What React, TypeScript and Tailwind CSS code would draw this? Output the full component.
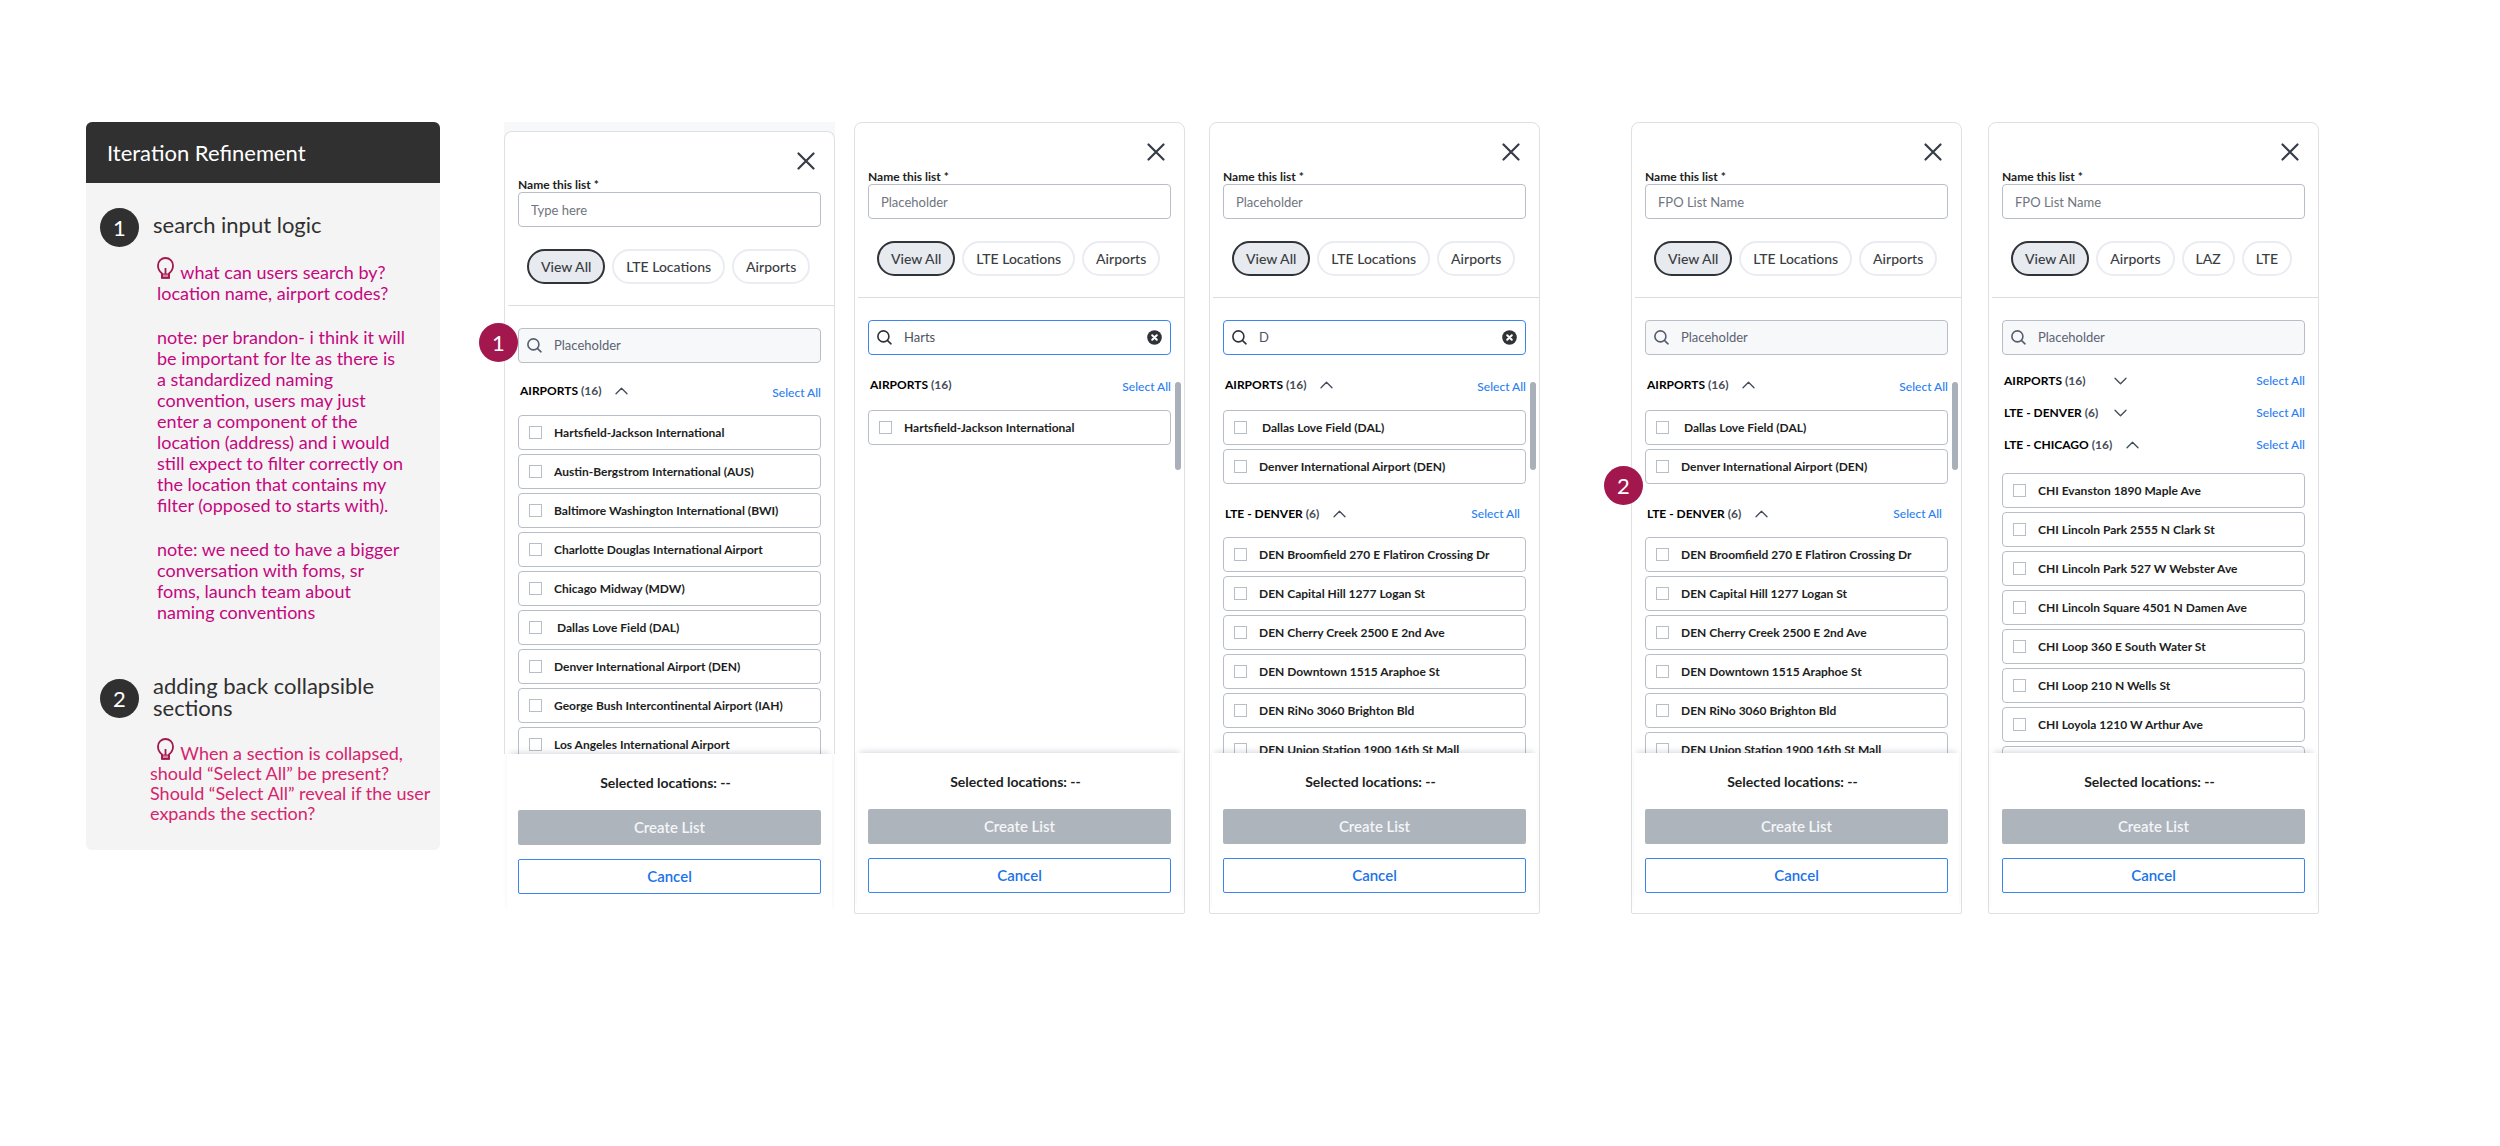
import { useState } from "react";
import { cva } from "class-variance-authority";
import clsx from "clsx";

interface Section {
  title: string;
  count: number;
  open?: boolean;
  chevron?: boolean;
  items: string[];
}

interface PanelProps {
  id: string;
  namePlaceholder: string;
  filters: string[];
  query?: string;
  sections: Section[];
  scrollbar?: boolean;
  sheet?: boolean; // slides over a grey page, no bottom edge
  compact?: boolean; // tighter section headings
  badge?: string;
  badgeCls?: string;
  className?: string;
}

const DEFAULT_FILTERS = ["View All", "LTE Locations", "Airports"];

const allAirports = [
  "Hartsfield-Jackson International",
  "Austin-Bergstrom International (AUS)",
  "Baltimore Washington International (BWI)",
  "Charlotte Douglas International Airport",
  "Chicago Midway (MDW)",
  "\u00a0Dallas Love Field (DAL)",
  "Denver International Airport (DEN)",
  "George Bush Intercontinental Airport (IAH)",
  "Los Angeles International Airport",
];

const denverSections: Section[] = [
  {
    title: "AIRPORTS",
    count: 16,
    open: true,
    chevron: true,
    items: ["\u00a0Dallas Love Field (DAL)", "Denver International Airport (DEN)"],
  },
  {
    title: "LTE - DENVER",
    count: 6,
    open: true,
    chevron: true,
    items: [
      "DEN Broomfield 270 E Flatiron Crossing Dr",
      "DEN Capital Hill 1277 Logan St",
      "DEN Cherry Creek 2500 E 2nd Ave",
      "DEN Downtown 1515 Araphoe St",
      "DEN RiNo 3060 Brighton Bld",
      "DEN Union Station 1900 16th St Mall",
    ],
  },
];

const chicagoSections: Section[] = [
  { title: "AIRPORTS", count: 16, chevron: true, items: [] },
  { title: "LTE - DENVER", count: 6, chevron: true, items: [] },
  {
    title: "LTE - CHICAGO",
    count: 16,
    open: true,
    chevron: true,
    items: [
      "CHI Evanston 1890 Maple Ave",
      "CHI Lincoln Park 2555 N Clark St",
      "CHI Lincoln Park 527 W Webster Ave",
      "CHI Lincoln Square 4501 N Damen Ave",
      "CHI Loop 360 E South Water St",
      "CHI Loop 210 N Wells St",
      "CHI Loyola 1210 W Arthur Ave",
      "",
    ],
  },
];

const chip = cva("h-[35px] rounded-full border-2 px-3 text-sm font-medium text-[#3a3d42]", {
  variants: {
    active: {
      true: "border-[#303338] bg-[#e7eaef]",
      false: "border-[#eaecf1] bg-white",
    },
  },
});

const CloseIcon = () => (
  <svg width="18" height="18" viewBox="0 0 18 18" fill="none" stroke="#363c48" strokeWidth="2.2" strokeLinecap="round">
    <path d="M1.5 1.5l15 15M16.5 1.5l-15 15" />
  </svg>
);

const SearchIcon = ({ active }: { active: boolean }) => (
  <svg
    width="15"
    height="15"
    viewBox="0 0 15 15"
    fill="none"
    strokeWidth="1.6"
    strokeLinecap="round"
    className={active ? "stroke-[#2f3338]" : "stroke-[#555d70]"}
  >
    <circle cx="6.4" cy="6.4" r="5.5" />
    <path d="M10.6 10.6l3.4 3.2" />
  </svg>
);

const ClearIcon = () => (
  <svg width="15" height="15" viewBox="0 0 15 15">
    <circle cx="7.5" cy="7.5" r="7.3" fill="#2f3338" />
    <path d="M5.2 5.2l4.6 4.6M9.8 5.2l-4.6 4.6" stroke="#fff" strokeWidth="2" strokeLinecap="round" />
  </svg>
);

const ChevronIcon = ({ open }: { open: boolean }) => (
  <svg width="13" height="8" viewBox="0 0 13 8" fill="none" stroke="#3f4b5a" strokeWidth="1.3" strokeLinecap="round" strokeLinejoin="round">
    <path d={open ? "M1 6.8l5.5-5.6L12 6.8" : "M1 1.2l5.5 5.6L12 1.2"} />
  </svg>
);

const BulbIcon = () => (
  <svg width="17" height="22" viewBox="0 0 17 22" fill="none" stroke="#a3174f" strokeWidth="1.8" className="-mt-2 mr-0.5 inline-block align-baseline">
    <path d="M5 20.8v-4.4C2.800 14.800 1 12.200 1 8.500a7.500 7.500 0 0 1 15 0c0 3.700-1.800 6.300-4 7.900v4.400z" />
    <path d="M8.5 11v6" />
    <path d="M5 17h7v3.800H5z" fill="#a3174f" fillOpacity=".5" strokeWidth="1.200" />
  </svg>
);

function Badge({ children, className }: { children: string; className?: string }) {
  return (
    <span className={clsx("flex size-[39px] shrink-0 items-center justify-center rounded-full text-[22px] text-white", className)}>
      {children}
    </span>
  );
}

interface SectionHeaderProps {
  section: Section;
  first: boolean;
  sheet: boolean;
  compact: boolean;
}

function SectionHeader({ section, first, sheet, compact }: SectionHeaderProps) {
  const open = !!section.open;
  const size = compact
    ? "h-8"
    : sheet
      ? "h-[52px] pt-1"
      : first
        ? "h-[55px] pt-1"
        : "h-[53px] pt-1.5 pr-1.5";

  return (
    <div className={clsx("flex items-center pl-0.5 text-xs", size)}>
      <button type="button" aria-expanded={open} className="flex items-center gap-3.5 font-bold text-black">
        <span className={clsx("text-left", !open && "min-w-[96px]")}>
          {section.title} <span className="text-[#464c57]">({section.count})</span>
        </span>
        {section.chevron && <ChevronIcon open={open} />}
      </button>
      <button type="button" className={clsx("ml-auto font-medium text-[#2a80f0]", !compact && first && "pt-1")}>
        Select All
      </button>
    </div>
  );
}

function LocationRow({ label }: { label: string }) {
  return (
    <label className="flex h-[35px] items-center gap-3 rounded-sm border border-[#b8bec8] pl-2.5 text-xs font-bold text-[#1c1e22]">
      <input type="checkbox" className="size-[13px] shrink-0 appearance-none border border-[#b8bec8] checked:bg-[#2a80f0]" />
      <span className="whitespace-pre">{label}</span>
    </label>
  );
}

function ListPanel({
  id,
  namePlaceholder,
  filters,
  query: initialQuery = "",
  sections,
  scrollbar,
  sheet = false,
  compact = false,
  badge,
  badgeCls,
  className,
}: PanelProps) {
  const [query, setQuery] = useState(initialQuery);
  const [filter, setFilter] = useState("View All");
  const active = query !== "";

  return (
    <section className={clsx("relative flex h-[792px] min-w-0 flex-1 flex-col", className)}>
      {sheet && <div className="-mb-2 h-[17px] shrink-0 bg-[#f7f8fa]" />}
      <div
        className={clsx(
          "flex min-h-0 flex-1 flex-col rounded-t-lg bg-white",
          !sheet && "rounded-b-xs border border-[#dfe0e4]",
        )}
      >
        <div className={clsx("flex min-h-0 flex-1 flex-col", sheet && "rounded-t-lg border-x border-t border-[#dfe0e4]")}>
          <div className="flex flex-col px-[13px]">
            <div className="flex justify-end pt-5 pr-1.5">
              <button type="button" aria-label="Close">
                <CloseIcon />
              </button>
            </div>
            <label
              htmlFor={`${id}-name`}
              className={clsx("text-xs leading-[14px] font-bold text-[#1c1e22]", sheet ? "mt-2" : "mt-[9px]")}
            >
              Name this list *
            </label>
            <input
              id={`${id}-name`}
              placeholder={namePlaceholder}
              className="h-[35px] rounded-sm border border-[#b8bec8] px-3 text-[13px] placeholder:text-[#6f7580]"
            />
            <div className="mt-[22px] flex gap-[7px] pl-[9px]">
              {filters.map((f) => (
                <button key={f} type="button" onClick={() => setFilter(f)} className={chip({ active: f === filter })}>
                  {f}
                </button>
              ))}
            </div>
          </div>

          <hr className="mt-[21px] ml-[3px] border-[#dcdde0]" />

          <div className="relative min-h-0 flex-1 overflow-hidden px-[13px] pt-[22px]">
            <div
              className={clsx(
                "flex h-[35px] items-center rounded-sm border pr-2 pl-2",
                active ? "border-[#3b86ee] bg-white" : "border-[#b8bec8] bg-[#f7f8fa]",
              )}
            >
              <SearchIcon active={active} />
              <input
                aria-label="Search locations"
                value={query}
                onChange={(e) => setQuery(e.target.value)}
                placeholder="Placeholder"
                className="ml-3 min-w-0 flex-1 text-[13px] text-[#4d5362] placeholder:text-[#5c6272] focus:outline-none"
              />
              {active && (
                <button type="button" aria-label="Clear search" onClick={() => setQuery("")}>
                  <ClearIcon />
                </button>
              )}
            </div>

            <div className={clsx(compact && "pt-2.5")}>
              {sections.map((s, i) => (
                <div key={s.title}>
                  <SectionHeader section={s} first={i === 0} sheet={sheet} compact={compact} />
                  <div className={clsx("flex flex-col gap-1", compact && s.open && "pt-3")}>
                    {s.items.map((item) => (
                      <LocationRow key={item} label={item} />
                    ))}
                  </div>
                </div>
              ))}
            </div>

            {scrollbar && <div className="absolute top-[84px] right-[3px] h-[88px] w-1.5 rounded-full bg-[#aab0ba]" />}
          </div>
        </div>

        <footer
          className={clsx(
            "relative flex flex-col bg-white px-[11px] pb-5 text-[15px] font-semibold shadow-[0_-4px_6px_-3px_rgba(60,70,100,0.22)]",
            sheet ? "mx-[3px]" : "mx-0.5",
          )}
        >
          <p className="pt-5 pr-2 text-center text-sm leading-[18px] font-bold text-[#1c1e22]">Selected locations: --</p>
          <button type="button" className="mt-[18px] h-[35px] rounded-xs bg-[#adb4bc] text-[#f4f6f8]">
            Create List
          </button>
          <button type="button" className="mt-3.5 h-[35px] rounded-xs border border-[#3b86ee] text-[#1c72e8]">
            Cancel
          </button>
        </footer>
      </div>

      {badge && <Badge className={clsx("absolute bg-[#a3174f]", badgeCls)}>{badge}</Badge>}
    </section>
  );
}

function Notes() {
  return (
    <aside className="w-[354px] shrink-0 self-start overflow-hidden rounded-md bg-[#f4f4f4] text-[#303030]">
      <h1 className="flex h-[61px] items-center bg-[#303030] pl-[21px] text-[22px] text-white">Iteration Refinement</h1>

      <div className="flex gap-3.5 pt-[25px] pl-3.5">
        <Badge className="bg-[#303030]">1</Badge>
        <h2 className="pt-1.5 text-[22px] leading-[22px]">search input logic</h2>
      </div>
      <div className="flex flex-col gap-[23px] pt-[15px] pl-[71px] text-lg leading-[21px] text-[#c5077f]">
        <p>
          <BulbIcon /> what can users search by?
          <br />
          location name, airport codes?
        </p>
        <p>
          note: per brandon- i think it will
          <br />
          be important for lte as there is
          <br />
          a standardized naming
          <br />
          convention, users may just
          <br />
          enter a component of the
          <br />
          location (address) and i would
          <br />
          still expect to filter correctly on
          <br />
          the location that contains my
          <br />
          filter (opposed to starts with).
        </p>
        <p>
          note: we need to have a bigger
          <br />
          conversation with foms, sr
          <br />
          foms, launch team about
          <br />
          naming conventions
        </p>
      </div>

      <div className="flex gap-3.5 pt-[52px] pl-3.5">
        <Badge className="mt-1 bg-[#303030]">2</Badge>
        <h2 className="text-[22px] leading-[22px]">
          adding back collapsible
          <br />
          sections
        </h2>
      </div>
      <p className="pt-6 pb-[27px] pl-16 text-lg leading-5 text-[#d6246e]">
        <span className="pl-[7px]">
          <BulbIcon /> When a section is collapsed,
        </span>
        <br />
        should “Select All” be present?
        <br />
        Should “Select All” reveal if the user
        <br />
        expands the section?
      </p>
    </aside>
  );
}

export default function App() {
  return (
    <main className="flex min-h-screen items-start bg-white pt-[122px] pr-[181px] pl-[86px] font-['Lato',sans-serif]">
      <Notes />
      <ListPanel
        id="default"
        className="ml-16"
        sheet
        namePlaceholder="Type here"
        filters={DEFAULT_FILTERS}
        sections={[{ title: "AIRPORTS", count: 16, open: true, chevron: true, items: allAirports }]}
        badge="1"
        badgeCls="top-[201px] -left-[25px]"
      />
      <ListPanel
        id="search-harts"
        className="ml-[19px]"
        namePlaceholder="Placeholder"
        filters={DEFAULT_FILTERS}
        query="Harts"
        sections={[{ title: "AIRPORTS", count: 16, open: true, items: ["Hartsfield-Jackson International"] }]}
        scrollbar
      />
      <ListPanel
        id="search-d"
        className="ml-6"
        namePlaceholder="Placeholder"
        filters={DEFAULT_FILTERS}
        query="D"
        sections={denverSections}
        scrollbar
      />
      <ListPanel
        id="expanded"
        className="ml-[91px]"
        namePlaceholder="FPO List Name"
        filters={DEFAULT_FILTERS}
        sections={denverSections}
        scrollbar
        badge="2"
        badgeCls="top-[344px] -left-[27px]"
      />
      <ListPanel
        id="collapsed"
        className="ml-[26px]"
        namePlaceholder="FPO List Name"
        filters={["View All", "Airports", "LAZ", "LTE"]}
        sections={chicagoSections}
        compact
      />
    </main>
  );
}
